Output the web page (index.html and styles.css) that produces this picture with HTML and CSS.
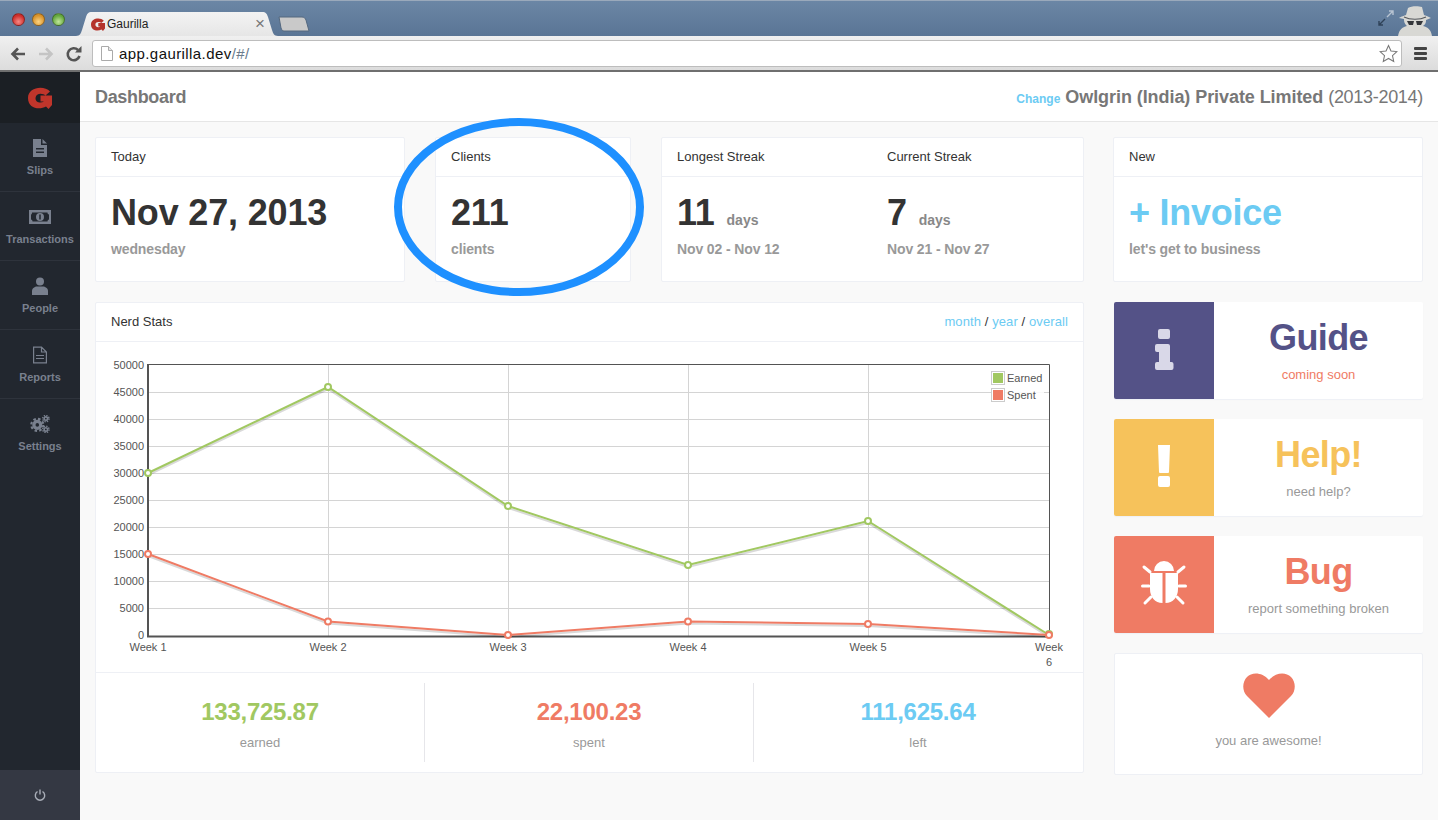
FILE: index.html
```html
<!DOCTYPE html>
<html lang="en">
<head>
<meta charset="utf-8">
<title>Gaurilla</title>
<link rel="stylesheet" href="styles.css">
</head>
<body>
<div class="browser">
  <div class="tabstrip">
    <div class="lights"><i class="light red"></i><i class="light amber"></i><i class="light green"></i></div>
    <div class="tab">
      <svg class="tab-shape" viewBox="0 0 204 24" width="204" height="24"><defs><linearGradient id="tabg" x1="0" y1="0" x2="0" y2="1"><stop offset="0" stop-color="#f3f3f3"/><stop offset="1" stop-color="#e6e6e6"/></linearGradient></defs><path d="M0 24C4 24 5 21 6 18L10 5C11 2 12 0 16 0H186C190 0 191 2 192 5L196 18C197 21 198 24 202 24Z" fill="url(#tabg)"/></svg>
      <svg class="tab-logo" viewBox="0 0 24 22" width="14" height="13"><path fill="#b5332b" d="M22 4.500L17.500 8.500C15 6 8 5.500 7.500 11C7.500 16 13 16.500 16 14.500H12.500V8.500H24V18L20.500 22L18 19.500C12 23 0 22 0 11C0 0 16 -2 22 4.500Z"/></svg>
      <span class="tab-title">Gaurilla</span>
      <span class="tab-close">×</span>
    </div>
    <svg class="newtab" viewBox="0 0 32 16" width="32" height="16"><path d="M1 1H24C26 1 27 2 28 4L31 15H6C4 15 4 14 3 12Z" fill="#c9c9c9" stroke="#54687f" stroke-width="1"/></svg>
    <svg class="fullscreen" viewBox="0 0 16 16" width="16" height="16"><path d="M9 7L15 1M11 1H15V5" fill="none" stroke="#b8c4d2" stroke-width="1.4"/><path d="M7 9L1 15M1 11V15H5" fill="none" stroke="#2f4258" stroke-width="1.4"/></svg>
    <svg class="incognito" viewBox="0 0 34 30" width="34" height="30"><path d="M0 30C1 24 4 21 9 20C6 17 6 15 6 13L1 12C4 10 6 10 8 9L10 2C13 0 20 0 24 1L26 9C29 10 31 11 33 12L28 14C28 16 28 18 25 20C30 21 33 24 34 30Z" fill="#d8d8d4"/><path d="M6 11C12 14 22 14 28 11" fill="none" stroke="#55585c" stroke-width="1.2"/><path d="M9 15H16L15 19H11ZM18 15H25L23 19H19Z" fill="#33363a"/></svg>
  </div>
  <div class="toolbar">
    <svg class="tool" viewBox="0 0 18 18" width="18" height="18"><path d="M16 9H4M9 3.500L3.500 9L9 14.500" fill="none" stroke="#555" stroke-width="2.600"/></svg>
    <svg class="tool" viewBox="0 0 18 18" width="18" height="18"><path d="M2 9H14M9 3.500L14.500 9L9 14.500" fill="none" stroke="#c4c4c4" stroke-width="2.600"/></svg>
    <svg class="tool" viewBox="0 0 18 18" width="18" height="18"><path d="M14.500 11A6 6 0 1 1 13 5" fill="none" stroke="#555" stroke-width="2.600"/><path d="M10 7.500H16.500V1Z" fill="#555"/></svg>
    <div class="omnibox">
      <svg class="page-ic" viewBox="0 0 12 15" width="12" height="15"><path d="M.5.5H7.500L11.500 4.500V14.500H.5Z" fill="#fff" stroke="#aaa"/><path d="M7.500.5V4.500H11.500" fill="#e6e6e6" stroke="#aaa"/></svg>
      <span class="url">app.gaurilla.dev<span class="url-dim">/#/</span></span>
      <svg class="star" viewBox="0 0 20 20" width="19" height="19"><path d="M10 1.500L12.600 7.300L18.800 8L14.200 12.200L15.500 18.400L10 15.200L4.500 18.400L5.800 12.200L1.200 8L7.400 7.300Z" fill="#fff" stroke="#777" stroke-width="1.100"/></svg>
    </div>
    <div class="menu-ic"><i></i><i></i><i></i></div>
  </div>
</div>

<div class="app">
  <nav class="sidebar">
    <div class="logo"><svg viewBox="0 0 24 22" width="24" height="22"><path fill="#c0352b" d="M22 4.500L17.500 8.500C15 6 8 5.500 7.500 11C7.500 16 13 16.500 16 14.500H12.500V8.500H24V18L20.500 22L18 19.500C12 23 0 22 0 11C0 0 16 -2 22 4.500Z"/></svg></div>
    <a class="nav-item"><svg viewBox="0 0 16 18" width="16" height="18"><path fill-rule="evenodd" d="M1 0H9V6H15V18H1ZM10.500 0L15 4.500H10.500ZM4 9V10.500H12V9ZM4 12.500V14H12V12.500Z"/></svg><span>Slips</span></a>
    <a class="nav-item"><svg viewBox="0 0 22 16" width="22" height="16"><path fill-rule="evenodd" d="M0 1H22V15H0ZM3 3.500C3 5 2.500 5.500 2 5.500V10.500C3 10.500 3.500 11.500 3.500 12.500H18.500C18.500 11.500 19 10.500 20 10.500V5.500C19 5.500 18.500 4.500 18.500 3.500ZM11 4A4 4 0 1 1 11 12A4 4 0 1 1 11 4Z"/><path d="M11 5.500V10.500" stroke="#22272f" stroke-width="1.500"/></svg><span>Transactions</span></a>
    <a class="nav-item"><svg viewBox="0 0 16 18" width="16" height="18"><circle cx="8" cy="4.500" r="4"/><path d="M0 18V14C0 11 3 9.500 5 9.500H11C13 9.500 16 11 16 14V18Z"/></svg><span>People</span></a>
    <a class="nav-item"><svg viewBox="0 0 14 17" width="14" height="17"><path fill="none" stroke="#79808e" stroke-width="1.200" d="M.6.600H8.500L13.400 5.500V16.400H.6ZM8.500.6V5.500H13.400M3 9H11M3 12H11"/></svg><span>Reports</span></a>
    <a class="nav-item nav-last"><svg viewBox="0 0 22 20" width="22" height="20"><g fill="none" stroke="#79808e"><circle cx="8" cy="11" r="3.800" stroke-width="3.600"/><circle cx="8" cy="11" r="6.700" stroke-width="2.400" stroke-dasharray="2.800 2.460"/><circle cx="17.500" cy="4" r="1.900" stroke-width="1.800"/><circle cx="17.500" cy="4" r="3.500" stroke-width="1.600" stroke-dasharray="1.500 1.250"/><circle cx="17.500" cy="16" r="1.900" stroke-width="1.800"/><circle cx="17.500" cy="16" r="3.500" stroke-width="1.600" stroke-dasharray="1.500 1.250"/></g></svg><span>Settings</span></a>
    <a class="nav-foot"><svg viewBox="0 0 12 12" width="12" height="12"><path d="M3.500 2.500A4.700 4.700 0 1 0 8.500 2.500M6 .5V5.500" fill="none" stroke="#a9aeb8" stroke-width="1.400"/></svg></a>
  </nav>

  <main class="main">
    <header class="topbar">
      <h1 class="page-title">Dashboard</h1>
      <div class="org"><a class="link change">Change</a> <strong>Owlgrin (India) Private Limited</strong> <span class="org-year">(2013-2014)</span></div>
    </header>

    <div class="content">
      <div class="col-left">
        <div class="row-top">
          <section class="card card-today">
            <div class="card-head">Today</div>
            <div class="card-body"><div class="big">Nov 27, 2013</div><div class="sub">wednesday</div></div>
          </section>
          <section class="card card-clients">
            <div class="card-head">Clients</div>
            <div class="card-body"><div class="big">211</div><div class="sub">clients</div></div>
          </section>
          <section class="card card-streak">
            <div class="card-head streak-grid"><span>Longest Streak</span><span>Current Streak</span></div>
            <div class="card-body streak-grid">
              <div><div class="big">11 <small>days</small></div><div class="sub">Nov 02 - Nov 12</div></div>
              <div><div class="big">7 <small>days</small></div><div class="sub">Nov 21 - Nov 27</div></div>
            </div>
          </section>
        </div>

        <section class="card card-stats">
          <div class="card-head head-split"><span>Nerd Stats</span><span class="ranges"><a class="link">month</a> / <a class="link">year</a> / <a class="link">overall</a></span></div>
          <svg class="chart" viewBox="0 0 987 330" width="987" height="330">
            <g stroke="#d4d4d4" stroke-width="1">
              <path d="M53 50.500H954M53 77.500H954M53 104.500H954M53 131.500H954M53 158.500H954M53 185.500H954M53 212.500H954M53 239.500H954M53 266.500H954"/>
              <path d="M233.500 23V294M413.500 23V294M593.500 23V294M773.500 23V294"/>
            </g>
            <path d="M53 22.500H954.500V294" fill="none" stroke="#545454"/>
            <path d="M53 22V294.500H955" fill="none" stroke="#545454" stroke-width="2"/>
            <g fill="#555" font-size="11" text-anchor="end" class="chart-text">
              <text x="49" y="27">50000</text><text x="49" y="54">45000</text><text x="49" y="81">40000</text><text x="49" y="108">35000</text><text x="49" y="135">30000</text><text x="49" y="162">25000</text><text x="49" y="189">20000</text><text x="49" y="216">15000</text><text x="49" y="243">10000</text><text x="49" y="270">5000</text><text x="49" y="297">0</text>
            </g>
            <g fill="#555" font-size="11" text-anchor="middle" class="chart-text">
              <text x="53" y="309">Week 1</text><text x="233" y="309">Week 2</text><text x="413" y="309">Week 3</text><text x="593" y="309">Week 4</text><text x="773" y="309">Week 5</text><text x="954" y="309">Week</text><text x="954" y="324">6</text>
            </g>
            <g fill="none" stroke="#000" stroke-opacity=".15" stroke-width="2">
              <path transform="translate(0 2)" d="M53 131L233 45L413 164L593 223L773 179L954 293"/>
              <path transform="translate(0 2)" d="M53 212L233 279.500L413 293L593 279.500L773 282L954 293"/>
            </g>
            <path d="M53 131L233 45L413 164L593 223L773 179L954 293" fill="none" stroke="#a1c861" stroke-width="2"/>
            <path d="M53 212L233 279.500L413 293L593 279.500L773 282L954 293" fill="none" stroke="#ef7b64" stroke-width="2"/>
            <g fill="#fff" stroke="#a1c861" stroke-width="2">
              <circle cx="53" cy="131" r="3"/><circle cx="233" cy="45" r="3"/><circle cx="413" cy="164" r="3"/><circle cx="593" cy="223" r="3"/><circle cx="773" cy="179" r="3"/>
            </g>
            <circle cx="954" cy="292" r="3" fill="#fff" stroke="#a1c861" stroke-width="2"/>
            <g fill="#fff" stroke="#ef7b64" stroke-width="2">
              <circle cx="53" cy="212" r="3"/><circle cx="233" cy="279.500" r="3"/><circle cx="413" cy="293" r="3"/><circle cx="593" cy="279.500" r="3"/><circle cx="773" cy="282" r="3"/><circle cx="954" cy="293" r="3"/>
            </g>
            <rect x="896" y="27" width="53" height="34" fill="#fff" fill-opacity=".85"/>
            <rect x="896.500" y="29.500" width="13" height="13" fill="#fff" stroke="#ccc"/>
            <rect x="898" y="31" width="10" height="10" fill="#a1c861"/>
            <rect x="896.500" y="46.500" width="13" height="13" fill="#fff" stroke="#ccc"/>
            <rect x="898" y="48" width="10" height="10" fill="#ef7b64"/>
            <g fill="#555" font-size="11" class="chart-text"><text x="912" y="40">Earned</text><text x="912" y="57">Spent</text></g>
          </svg>
          <div class="totals">
            <div class="total"><div class="amount green">133,725.87</div><div class="total-label">earned</div></div>
            <div class="total"><div class="amount coral">22,100.23</div><div class="total-label">spent</div></div>
            <div class="total"><div class="amount sky">111,625.64</div><div class="total-label">left</div></div>
          </div>
        </section>
      </div>

      <aside class="col-right">
        <section class="card card-new">
          <div class="card-head">New</div>
          <div class="card-body"><div class="big sky">+ Invoice</div><div class="sub">let's get to business</div></div>
        </section>
        <a class="tile">
          <span class="tile-ic bg-indigo"><svg viewBox="0 0 19 41" width="19" height="41"><path fill="#d9d8e8" d="M5 0H13A2 2 0 0 1 15 2V8A2 2 0 0 1 13 10H5A2 2 0 0 1 3 8V2A2 2 0 0 1 5 0ZM2 15H13A2 2 0 0 1 15 17V33H16.500A2 2 0 0 1 18.500 35V39A2 2 0 0 1 16.500 41H2A2 2 0 0 1 0 39V35A2 2 0 0 1 2 33H4V23H2A2 2 0 0 1 0 21V17A2 2 0 0 1 2 15Z"/></svg></span>
          <span class="tile-text"><b class="tile-title indigo">Guide</b><small class="tile-sub coral">coming soon</small></span>
        </a>
        <a class="tile">
          <span class="tile-ic bg-amber"><svg viewBox="0 0 14 42" width="14" height="42"><path fill="#fff" d="M1 0H13L12 27A1 1 0 0 1 11 28H3A1 1 0 0 1 2 27ZM3 31H11A2 2 0 0 1 13 33V40A2 2 0 0 1 11 42H3A2 2 0 0 1 1 40V33A2 2 0 0 1 3 31Z"/></svg></span>
          <span class="tile-text"><b class="tile-title amber">Help!</b><small class="tile-sub">need help?</small></span>
        </a>
        <a class="tile">
          <span class="tile-ic bg-coral"><svg viewBox="0 0 46 46" width="46" height="46"><g fill="#fff"><path d="M13 11A10 10 0 0 1 33 11Z"/><path d="M9 13H21.500V43C14 43 9 37 9 29ZM24.500 13H37V29C37 37 32 43 24.500 43Z"/></g><g stroke="#fff" stroke-width="3" stroke-linecap="round" fill="none"><path d="M9 12L3 7M37 12L43 7M8 26H1.500M38 26H44.500M10 37L4 43M36 37L42 43"/></g></svg></span>
          <span class="tile-text"><b class="tile-title coral">Bug</b><small class="tile-sub">report something broken</small></span>
        </a>
        <section class="card card-love">
          <svg viewBox="0 0 52 46" width="52" height="46"><path fill="#ef7b64" d="M26 45L4 23C-1 18-1 9 4 4C9-1 19-1 26 7C33-1 43-1 48 4C53 9 53 18 48 23Z"/></svg>
          <div class="tile-sub">you are awesome!</div>
        </section>
      </aside>
    </div>
  </main>
</div>

<svg class="annotation" viewBox="0 0 258 186" width="258" height="186"><ellipse cx="129" cy="93" rx="121" ry="85" fill="none" stroke="#1e90ff" stroke-width="8"/></svg>
</body>
</html>
```

FILE: styles.css
```css
* { box-sizing: border-box; }
html, body { height: 100%; }
body {
  margin: 0;
  width: 1438px;
  height: 820px;
  overflow: hidden;
  position: relative;
  display: flex;
  flex-direction: column;
  background: #f9f9f9;
  color: #333;
  font-family: "Liberation Sans", Arial, sans-serif;
  font-size: 13px;
}
a { text-decoration: none; }
.link { color: #6ccbf3; }
.sky { color: #6ccbf3; }
.green { color: #a1c861; }
.coral { color: #ef7b64; }
.indigo { color: #545287; }
.amber { color: #f6c25b; }
.bg-indigo { background: #545287; }
.bg-amber { background: #f6c25b; }
.bg-coral { background: #ef7b64; }

/* browser chrome */
.browser { flex: none; height: 72px; }
.tabstrip {
  height: 36px;
  position: relative;
  display: flex;
  align-items: flex-end;
  background: linear-gradient(#6b86a5, #5a7595);
  border-top: 1px solid #9aa9bb;
}
.lights { display: flex; gap: 7px; align-self: flex-start; margin: 12px 0 0 12px; }
.light { width: 13px; height: 13px; border-radius: 50%; border: 1px solid rgba(0,0,0,.35); }
.light.red { background: radial-gradient(circle at 50% 70%, #f68a86, #cf2f2c 65%); }
.light.amber { background: radial-gradient(circle at 50% 70%, #fbd483, #d9932b 65%); }
.light.green { background: radial-gradient(circle at 50% 70%, #c2e69b, #64a83e 65%); }
.tab {
  position: relative;
  width: 204px;
  height: 24px;
  margin-left: 11px;
  display: flex;
  align-items: center;
  padding-left: 15px;
}
.tab-shape { position: absolute; left: 0; top: 0; }
.tab-logo { position: relative; flex: none; }
.tab-title { position: relative; margin-left: 2px; font-size: 12px; color: #222; }
.tab-close { position: absolute; left: 179px; top: 2px; font-size: 17px; color: #777; }
.newtab { margin: 0 0 4px -2px; }
.fullscreen { position: absolute; right: 44px; top: 9px; }
.incognito { position: absolute; right: 6px; top: 5px; }
.toolbar {
  height: 36px;
  display: flex;
  align-items: center;
  padding: 1px 0 0 9px;
  gap: 10px;
  background: linear-gradient(#f0f0f0, #dcdcdc);
  border-bottom: 2px solid #6f6f6f;
}
.tool { flex: none; }
.omnibox {
  width: 1310px;
  height: 27px;
  margin-left: -1px;
  display: flex;
  align-items: center;
  padding: 0 3px 0 8px;
  background: #fff;
  border: 1px solid #bdbdbd;
  border-radius: 3px;
}
.page-ic { flex: none; }
.url { margin-left: 6px; flex: 1; font-size: 15px; color: #111; letter-spacing: .42px; }
.url-dim { color: #6a7b8c; }
.star { flex: none; }
.menu-ic { display: flex; flex-direction: column; gap: 2px; width: 13px; margin-left: 2px; }
.menu-ic i { height: 3px; background: #444; border-radius: 1px; }

/* app shell */
.app { flex: 1; display: flex; min-height: 0; }
.sidebar {
  flex: none;
  width: 80px;
  display: flex;
  flex-direction: column;
  background: #22272f;
}
.logo {
  height: 51px;
  display: flex;
  align-items: center;
  justify-content: center;
  background: #1b1f24;
}
.nav-item {
  height: 69px;
  display: flex;
  flex-direction: column;
  align-items: center;
  padding-top: 16px;
  border-bottom: 1px solid #2e333c;
  color: #79808e;
  font-size: 11px;
  font-weight: 700;
}
.nav-last { border-bottom: 0; }
.nav-item svg { height: 18px; margin-bottom: 7px; fill: #79808e; }
.nav-foot {
  margin-top: auto;
  height: 50px;
  display: flex;
  align-items: center;
  justify-content: center;
  background: #343843;
}
.main { flex: 1; min-width: 0; display: flex; flex-direction: column; }
.topbar {
  flex: none;
  height: 50px;
  display: flex;
  align-items: center;
  justify-content: space-between;
  padding: 1px 15px 0;
  background: #fff;
  border-bottom: 1px solid #e6e6e6;
}
.page-title { margin: 0; font-size: 18px; font-weight: 700; color: #777; letter-spacing: -.33px; }
.org { font-size: 18px; color: #777; }
.org strong { font-weight: 700; letter-spacing: -.07px; }
.org-year { font-weight: 400; letter-spacing: -.3px; }
.change { font-size: 12px; font-weight: 700; }

.content {
  display: flex;
  gap: 29px;
  padding: 15px 15px 0;
}
.col-left { width: 989px; display: flex; flex-direction: column; gap: 20px; }
.col-right { width: 310px; display: flex; flex-direction: column; gap: 20px; }
.row-top { display: flex; gap: 30px; }

.card {
  background: #fff;
  border: 1px solid #eef0f5;
  border-radius: 2px;
}
.card-today { width: 310px; }
.card-clients { width: 196px; }
.card-streak { width: 423px; }
.card-head {
  height: 39px;
  padding: 0 15px 2px;
  display: flex;
  align-items: center;
  border-bottom: 1px solid #eef0f5;
  font-size: 13px;
  color: #333;
}
.card-body { height: 104px; padding: 15px 15px 0; }
.big { font-size: 36px; line-height: 42px; font-weight: 700; color: #333; letter-spacing: -.17px; }
.big.sky { color: #6ccbf3; letter-spacing: -.25px; }
.big small { margin-left: 2px; font-size: 14px; line-height: 1; letter-spacing: 0; color: #888; }
.sub { margin-top: 5px; font-size: 14px; line-height: 20px; color: #999; font-weight: 700; letter-spacing: -.12px; }
.streak-grid { display: grid; grid-template-columns: 210px 1fr; }
.head-split { display: flex; justify-content: space-between; }
.ranges { color: #333; letter-spacing: .1px; }
.chart { display: block; margin-left: -1px; }
.totals {
  display: flex;
  height: 100px;
  padding: 10px 1px 10px 0;
  border-top: 1px solid #eef0f5;
}
.total {
  flex: 1;
  text-align: center;
  padding-top: 15px;
  border-left: 1px solid #e6e6ea;
}
.total:first-child { border-left: 0; }
.amount { font-size: 24px; line-height: 28px; font-weight: 700; letter-spacing: -.25px; }
.total-label { margin-top: 9px; font-size: 13px; color: #999; }

.tile {
  height: 97px;
  display: flex;
  background: #fff;
  border-radius: 2px;
  box-shadow: 0 1px 1px #eef0f5;
  margin-left: 1px;
  width: 309px;
}
.tile-ic { flex: none; width: 100px; padding-bottom: 3px; display: flex; align-items: center; justify-content: center; border-radius: 2px 0 0 2px; }
.tile-text { flex: 1; display: flex; flex-direction: column; align-items: center; padding-top: 15px; }
.tile-title { font-size: 36px; line-height: 42px; font-weight: 700; letter-spacing: -.6px; }
.tile-sub { display: block; margin-top: 8px; font-size: 13px; line-height: 16px; color: #999; }
.tile-sub.coral { color: #ef7b64; }
.card-love {
  height: 122px;
  margin-left: 1px;
  display: flex;
  flex-direction: column;
  align-items: center;
  padding-top: 19px;
}
.card-love .tile-sub { margin-top: 14px; }

/* hand-drawn annotation lying over the Clients card */
.annotation { position: absolute; left: 390px; top: 114px; pointer-events: none; }
```
